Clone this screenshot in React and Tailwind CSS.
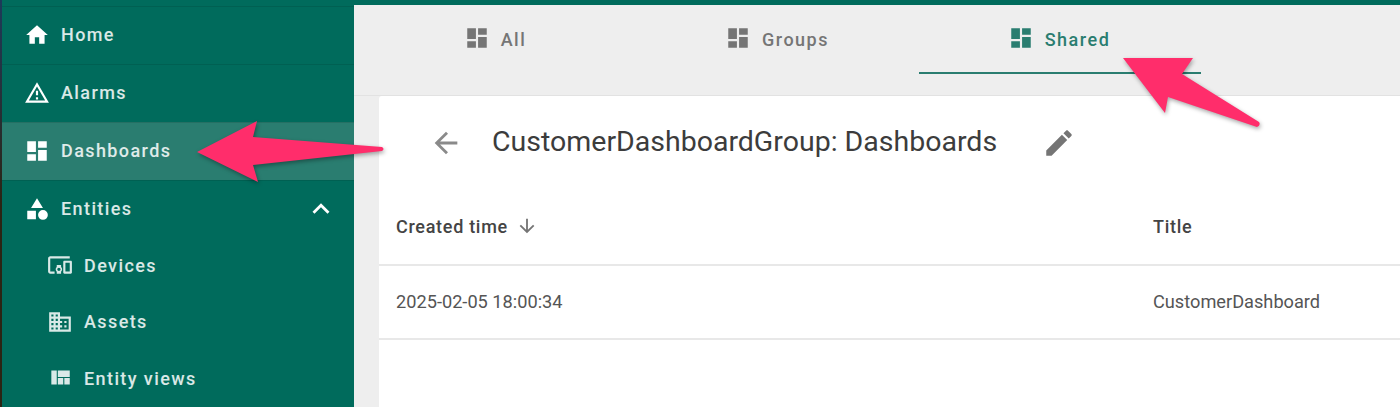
import React from "react";

const paths = {
  home: "M10 20v-6h4v6h5v-8h3L12 3 2 12h3v8z",
  alarm: "M12 5.99L19.53 19H4.47L12 5.99M12 2L1 21h22L12 2zm1 14h-2v2h2v-2zm0-6h-2v4h2v-4z",
  dashboard: "M3 13h8V3H3v10zm0 8h8v-6H3v6zm10 0h8V11h-8v10zm0-18v6h8V3h-8z",
  entities: "M12 2l-5.5 9h11zM3 13.5h8v8H3zM17.5 13a4.5 4.5 0 1 0 0 9 4.5 4.5 0 0 0 0-9z",
  devices:
    "M3 6h18V4H3c-1.1 0-2 .9-2 2v12c0 1.1.9 2 2 2h4v-2H3V6zm10 6H9v1.78c-.61.55-1 1.33-1 2.22s.39 1.67 1 2.22V20h4v-1.78c.61-.55 1-1.34 1-2.22s-.39-1.67-1-2.22V12zm-2 5.5c-.83 0-1.5-.67-1.5-1.5s.67-1.5 1.5-1.5 1.5.67 1.5 1.5-.67 1.5-1.5 1.5zM22 8h-6c-.5 0-1 .5-1 1v10c0 .5.5 1 1 1h6c.5 0 1-.5 1-1V9c0-.5-.5-1-1-1zm-1 10h-4v-8h4v8z",
  assets:
    "M12 7V3H2v18h20V7H12zM6 19H4v-2h2v2zm0-4H4v-2h2v2zm0-4H4V9h2v2zm0-4H4V5h2v2zm4 12H8v-2h2v2zm0-4H8v-2h2v2zm0-4H8V9h2v2zm0-4H8V5h2v2zm10 12h-8v-2h2v-2h-2v-2h2v-2h-2V9h8v10zm-2-8h-2v2h2v-2zm0 4h-2v2h2v-2z",
  views: "M10 18h5v-6h-5v6zm-6 0h5V5H4v13zm12 0h5v-6h-5v6zM10 5v6h11V5H10z",
  chevron: "M12 8l-6 6 1.41 1.41L12 10.83l4.59 4.58L18 14z",
  back: "M20 11H7.83l5.59-5.59L12 4l-8 8 8 8 1.41-1.41L7.83 13H20v-2z",
  edit: "M3 17.25V21h3.75L17.81 9.94l-3.75-3.75L3 17.25zM20.71 7.04c.39-.39.39-1.02 0-1.41l-2.34-2.34c-.39-.39-1.02-.39-1.41 0l-1.83 1.83 3.75 3.75 1.83-1.83z",
  down: "M20 12l-1.41-1.41L13 16.17V4h-2v12.17l-5.58-5.59L4 12l8 8 8-8z",
};

function Icon({ name, className }) {
  return (
    <svg viewBox="0 0 24 24" fill="currentColor" className={className}>
      <path d={paths[name]} />
    </svg>
  );
}

function MenuItem({ icon, label, active, children }) {
  return (
    <div
      className={`h-[58px] flex items-center pl-[22px] pr-[16px] pb-[2px] border-t border-black/10 ${
        active ? "bg-[#2a7d70]" : ""
      }`}
    >
      <Icon name={icon} className="w-[26px] h-[26px] text-white shrink-0" />
      <span className="ml-[11px] flex-1 text-[18px] font-medium tracking-[1.4px] text-white/85">
        {label}
      </span>
      {children}
    </div>
  );
}

function SubItem({ icon, label }) {
  return (
    <div className="h-[56.5px] flex items-center pl-[45px] pb-[2px]">
      <Icon name={icon} className="w-[26px] h-[26px] text-white/85 shrink-0" />
      <span className="ml-[11px] text-[18px] font-medium tracking-[1.4px] text-white/85">
        {label}
      </span>
    </div>
  );
}

function Tab({ label, active }) {
  return (
    <div
      className={`w-[282px] h-[69px] flex justify-center pt-[21px] border-b-2 ${
        active ? "border-[#2a7d70] text-[#2a7d70]" : "border-transparent text-[#757575]"
      }`}
    >
      <div className="flex items-start gap-[11px]">
        <Icon name="dashboard" className="w-[26px] h-[26px] -ml-[2px] -mt-[1px]" />
        <span className="text-[18px] font-medium tracking-[1.5px] leading-[28px]">{label}</span>
      </div>
    </div>
  );
}

function Arrows() {
  return (
    <svg
      viewBox="0 0 1400 407"
      className="absolute inset-0 w-[1400px] h-[407px] pointer-events-none drop-shadow-[1px_2px_2px_rgba(0,0,0,0.35)]"
    >
      <path
        d="M197 152L257 121L253 137L382 147Q385 149 382 151L253 165L258 182Z"
        fill="#ff2d6b"
      />
      <path
        d="M1123 58L1193 58L1182 74L1259 122Q1261 125 1257 127L1168 97L1165 113Z"
        fill="#ff2d6b"
      />
    </svg>
  );
}

export default function App() {
  return (
    <div className="relative w-[1400px] h-[407px] overflow-hidden flex bg-[#eeeeee] font-['Roboto',sans-serif]">
      <div className="w-[2px] bg-gradient-to-b from-[#1c3a5a] via-[#2b2414] to-[#2b2414]" />
      <aside className="w-[352px] bg-[#006b5c] pt-[6px] shrink-0">
        <MenuItem icon="home" label="Home" />
        <MenuItem icon="alarm" label="Alarms" />
        <MenuItem icon="dashboard" label="Dashboards" active />
        <MenuItem icon="entities" label="Entities">
          <Icon name="chevron" className="w-[34px] h-[34px] text-white" />
        </MenuItem>
        <SubItem icon="devices" label="Devices" />
        <SubItem icon="assets" label="Assets" />
        <SubItem icon="views" label="Entity views" />
      </aside>

      <main className="flex-1 flex flex-col min-w-0">
        <div className="h-[5px] bg-[#006b5c] shrink-0" />
        <div className="h-[91px] flex pl-px shrink-0 border-b border-[#e2e2e2]">
          <Tab label="All" />
          <Tab label="Groups" />
          <Tab label="Shared" active />
        </div>
        <div className="flex-1 ml-[25px] bg-white rounded-tl-[3px]">
          <div className="h-[90px] flex items-center pl-[50px] pt-[3px]">
            <Icon name="back" className="w-[34px] h-[34px] text-[#8a8a8a] shrink-0" />
            <h1 className="ml-[29px] text-[28.5px] font-normal text-[#3c3c3c] whitespace-nowrap">
              CustomerDashboardGroup: Dashboards
            </h1>
            <Icon name="edit" className="ml-[45px] w-[34px] h-[34px] text-[#757575] shrink-0" />
          </div>
          <div className="h-[80px] flex items-center border-b-2 border-[#e8e8e8] pl-[17px] pt-[2px] text-[#444444] text-[18px] font-medium tracking-[0.7px]">
            <div className="w-[757px] flex items-center gap-[8px]">
              Created time
              <Icon name="down" className="w-[22px] h-[22px] text-[#757575]" />
            </div>
            <div>Title</div>
          </div>
          <div className="h-[74px] flex items-center border-b-2 border-[#e8e8e8] pl-[17px] text-[#555555] text-[18.2px]">
            <div className="w-[757px]">2025-02-05 18:00:34</div>
            <div>CustomerDashboard</div>
          </div>
        </div>
      </main>

      <Arrows />
    </div>
  );
}
